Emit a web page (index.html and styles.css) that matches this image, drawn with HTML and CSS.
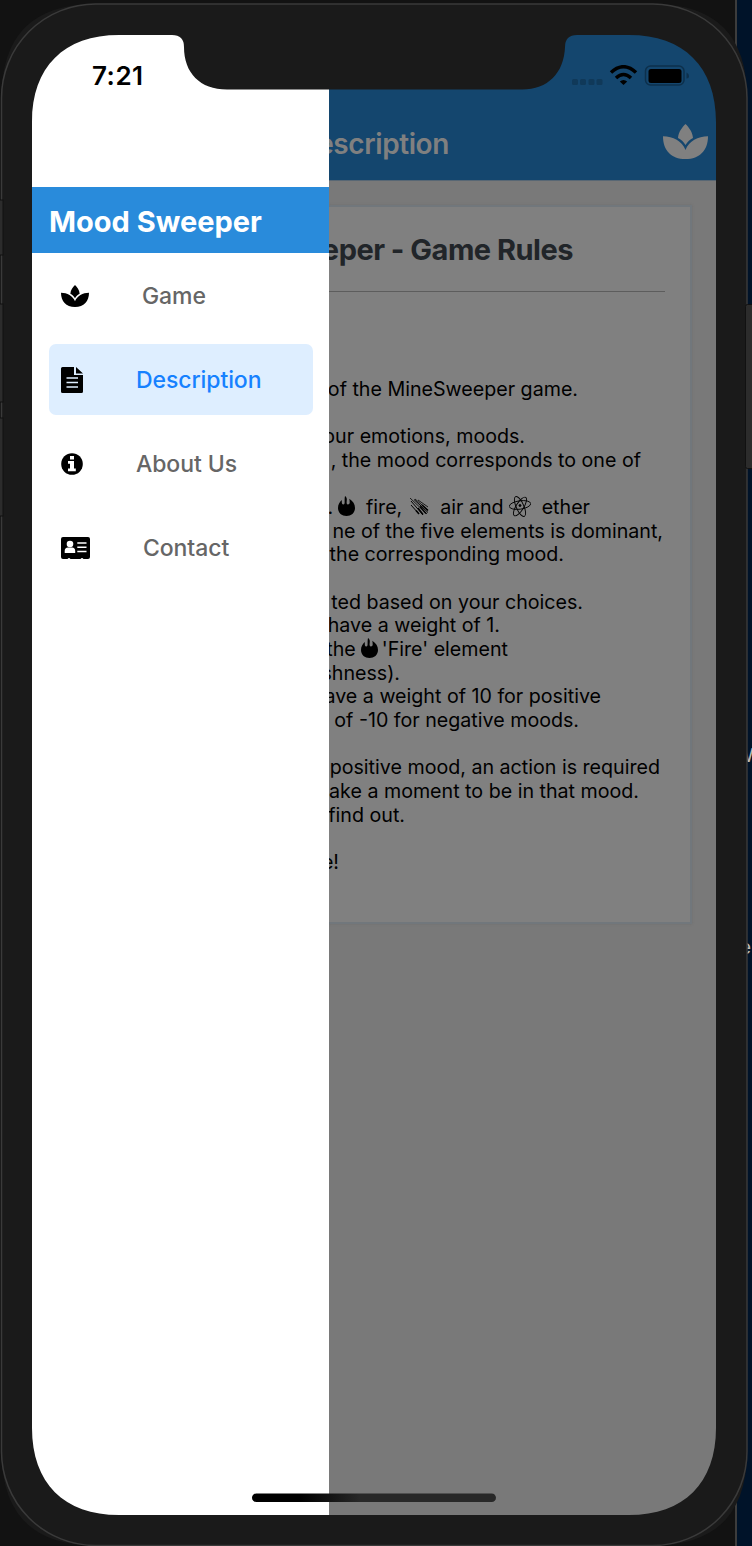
FILE: index.html
```html
<!DOCTYPE html>
<html lang="en">
<head>
<meta charset="utf-8">
<title>Mood Sweeper</title>
<link rel="stylesheet" href="styles.css">
</head>
<body>
<svg width="0" height="0" class="defs">
  <symbol id="spa" viewBox="0 0 45 35"><path d="M22.500 0C19 3.500 15.500 8 15 14C18 15.500 20.500 17.500 22.500 21C24.500 17.500 27 15.500 30 14C29.500 8 26 3.500 22.500 0ZM0 12.200C0 26 8 35 22.500 35S45 26 45 12.200C35 12.200 26 17 22.500 26C19 17 10 12.200 0 12.200Z"/></symbol>
  <symbol id="flame" viewBox="0 0 17 20"><path d="M7 0C10 2 8.300 5 8.700 7.500C9 9 11.700 8.800 11.700 6.500C11.700 5 11.500 4 11.300 2.800C15 5 17 8.500 17 12C17 17 13 20 8.500 20S0 17 0 12C0 8.500 1.500 6 4 4C3.500 6.500 3.800 8.500 5.300 8.500C7.600 8.500 6 4.500 7 0Z"/></symbol>
</svg>
<div class="desktop">
  <span class="edge-text edge-w">W</span>
  <span class="edge-text edge-e">e</span>
  <div class="screen">
    <aside class="drawer">
      <div class="clock">7:21</div>
      <h1 class="brand">Mood Sweeper</h1>
      <nav class="menu">
        <a class="item"><svg class="ico" width="28" height="22"><use href="#spa"/></svg><span class="label">Game</span></a>
        <a class="item active"><svg class="ico" width="22" height="26" viewBox="0 0 22 26"><path d="M1.500 0H13V8H22V24.500Q22 26 20.500 26H1.500Q0 26 0 24.500V1.500Q0 0 1.500 0ZM15 0L22 6.500H15Z"/><path d="M5.500 11H17M5.500 15.500H17M5.500 20H17" stroke="#deeeff" stroke-width="1.500"/></svg><span class="label">Description</span></a>
        <a class="item"><svg class="ico" width="22" height="22" viewBox="0 0 22 22"><circle cx="11" cy="11" r="10.800"/><path d="M9 3H13V6.500H9ZM7 8H13V15.500H14.800V18.300H7V15.500H9V10.800H7Z" fill="#fff"/></svg><span class="label">About Us</span></a>
        <a class="item"><svg class="ico" width="29" height="22" viewBox="0 0 29 22"><path d="M2 0H27Q29 0 29 2V20Q29 22 27 22H22.500Q21 20 19.500 22H9.500Q8 20 6.500 22H2Q0 22 0 20V2Q0 0 2 0Z"/><circle cx="9" cy="7" r="3.300" fill="#fff"/><path d="M3.700 16V14Q3.700 10.500 7 10.500H11Q14.200 10.500 14.200 14V16Z" fill="#fff"/><path d="M16.300 6H25.500M16.300 10.300H25.500M16.300 14.500H25.500" stroke="#fff" stroke-width="1.400"/></svg><span class="label">Contact</span></a>
      </nav>
    </aside>
    <main class="page">
      <header class="topbar">
        <div class="status">
          <svg width="118" height="24" viewBox="0 0 118 24"><g fill="#103959"><rect x="1" y="14" width="6" height="6" rx="1.500"/><rect x="9" y="14" width="6" height="6" rx="1.500"/><rect x="17.500" y="14" width="6" height="6" rx="1.500"/><rect x="25.500" y="14" width="6" height="6" rx="1.500"/></g><g fill="none" stroke="#000"><path d="M40 7.500Q52.500-4 65 7.500" stroke-width="3.500"/><path d="M45 13Q52.500 6 60 13" stroke-width="3.500"/></g><path d="M48.800 16.500Q52.500 13.500 56.200 16.500L52.500 20Z"/><rect x="74.500" y="1" width="38.500" height="19" rx="5" fill="none" stroke="#0d304c" stroke-width="1.500"/><rect x="77.500" y="4" width="33" height="14" rx="2.500"/><path d="M115.500 7.500Q118 8.500 118 11T115.500 13.500Z" fill="#0d304c"/></svg>
        </div>
        <div class="heading"><span>Description</span><svg width="45" height="35" fill="#808080"><use href="#spa"/></svg></div>
      </header>
      <section class="card">
        <h2 class="rules">Sweeper - Game Rules</h2>
        <div class="lines">
          <p>of the MineSweeper game.</p>
          <p></p>
          <p>your emotions, moods.</p>
          <p>, the mood corresponds to one of</p>
          <p></p>
          <p class="elements"><span>.</span><svg width="17" height="20"><use href="#flame"/></svg><span class="fire">fire,</span><svg class="air" width="19" height="18" viewBox="0 0 19 18" fill="none" stroke="#000"><path d="M0 0L17 16M5 1L18 12M8 2L18 9" stroke-width="0.800"/><path d="M1 7L9 16M1 3L13 17M4 1.500L18 14.500" stroke-width="1"/><path d="M6 12.500L9 16M8 10L13 16.500M10 8.500L16 15.500M12 7L18 12.500" stroke-width="1.500"/></svg><span class="wind">air and</span><svg class="atom" width="22" height="21" viewBox="0 0 22 21" fill="none" stroke="#000" stroke-width="0.900"><ellipse cx="11" cy="10.500" rx="3.800" ry="10.800" transform="rotate(32 11 10.500)"/><ellipse cx="11" cy="10.500" rx="3.800" ry="10.800" transform="rotate(-24 11 10.500)"/><ellipse cx="11" cy="9" rx="4.200" ry="10.800" transform="rotate(82 11 9)"/><circle cx="11" cy="9.500" r="1" fill="#000"/></svg><span>ether</span></p>
          <p>ne of the five elements is dominant,</p>
          <p>the corresponding mood.</p>
          <p></p>
          <p>ted based on your choices.</p>
          <p>have a weight of 1.</p>
          <p class="elements"><span>the</span><svg width="17" height="20"><use href="#flame"/></svg><span class="quote">'Fire' element</span></p>
          <p>shness).</p>
          <p>have a weight of 10 for positive</p>
          <p>of -10 for negative moods.</p>
          <p></p>
          <p>positive mood, an action is required</p>
          <p>take a moment to be in that mood.</p>
          <p>find out.</p>
          <p></p>
          <p>e!</p>
        </div>
      </section>
    </main>
  </div>
  <svg class="bezel" width="752" height="1546" viewBox="0 0 752 1546">
    <path fill="#1a1a1a" fill-rule="evenodd" d="M95.500 4H653Q747 4 747 98V1451Q747 1545.500 653 1545.500H95.500Q1.500 1545.500 1.500 1451V98Q1.500 4 95.500 4ZM32 122V1428C32 1483 64 1515 119 1515H629C684 1515 716 1483 716 1428V122C716 67 684 35 629 35H577Q565 35 565 47C564 73 548 89.500 522 89.500H227C200 89.500 184 73 184 47Q184 35 172 35H119C64 35 32 67 32 122Z"/>
    <rect x="1.500" y="4" width="745.500" height="1541.500" rx="94" fill="#1a1a1a" fill-opacity="0" stroke="#3a3a3a" stroke-width="1.500"/>
    <g fill="#2c2c2c" stroke="#111"><rect x="-4" y="200" width="7" height="55"/><rect x="-4" y="304" width="7" height="98"/><rect x="-4" y="418" width="7" height="98"/><rect x="745.500" y="304.500" width="12" height="164" rx="2"/></g>
    <defs><linearGradient id="home" gradientUnits="userSpaceOnUse" x1="300" y1="0" x2="360" y2="0"><stop stop-color="#000"/><stop offset="1" stop-color="#282828"/></linearGradient></defs>
    <rect x="252" y="1493.500" width="244" height="8.500" rx="4.250" fill="url(#home)"/>
  </svg>
</div>
</body>
</html>
```
FILE: styles.css
```css
* { box-sizing: border-box; }
body { margin: 0; font-family: Inter, "Liberation Sans", sans-serif; color: #000; }
.defs { position: absolute; }
.desktop {
  position: relative; width: 752px; height: 1546px; overflow: hidden; padding: 35px 36px 31px 32px;
  background: linear-gradient(90deg, #121212 735px, #3c3c3c 735px 736.500px, #001329 737px);
}
.edge-text { position: absolute; right: -10px; color: #bbb; font-size: 19px; line-height: 20px; }
.edge-w { top: 746px; }
.edge-e { top: 938px; right: 1px; }
.bezel { position: absolute; left: 0; top: 0; pointer-events: none; }
.screen { display: flex; width: 684px; height: 1480px; background: #797979; }
.drawer { flex: none; width: 297px; background: #fff; }
.clock { height: 152px; padding: 25px 0 0 60px; font-size: 26px; line-height: 32px; font-weight: 600; letter-spacing: 0.500px; }
.brand { margin: 0; height: 66px; padding-left: 17px; background: #298bdb; color: #fff; font-size: 29px; line-height: 70px; font-weight: 700; letter-spacing: 0; white-space: nowrap; }
.menu { display: grid; gap: 13.200px; padding: 7px 16px 0 16.500px; }
.item { display: flex; align-items: center; height: 71px; padding-left: 12.500px; border-radius: 7px; font-size: 23px; letter-spacing: -0.080px; font-weight: 500; color: #666; }
.active { background: #deeeff; color: #1681ff; }
.ico { flex: none; margin-right: 53px; }
.label { white-space: nowrap; }
.page { flex: 1; min-width: 0; overflow: hidden; }
.topbar { height: 146px; background: #14466e; border-bottom: 1px solid #586774; }
.status { display: flex; justify-content: flex-end; height: 84px; padding: 30px 27.500px 0 0; }
.heading { display: flex; justify-content: space-between; align-items: flex-start; height: 60px; padding: 5px 8px 0 0; color: #808080; font-size: 28px; line-height: 40px; font-weight: 600; letter-spacing: -0.400px; }
.heading span { width: 120px; display: flex; justify-content: flex-end; }
.card { width: 363px; height: 719px; margin-top: 24px; padding: 24px 0 0; background: #808080; border: 2px solid #71777c; border-left: 0; box-shadow: 0 0 2px #6c6c6c; }
.rules { display: flex; justify-content: flex-end; width: 336px; height: 61px; margin: 0; padding-right: 92px; border-bottom: 1px solid #5d5d5d; color: #212529; font-size: 29px; line-height: 38px; font-weight: 700; letter-spacing: -0.500px; white-space: nowrap; }
.lines { padding-top: 86px; font-size: 19.650px; line-height: 23.650px; }
.lines p { display: flex; justify-content: flex-end; width: 249px; height: 23.650px; margin: 0; white-space: nowrap; }
.lines p:nth-child(3) { width: 196px; }
.lines p:nth-child(4) { width: 312px; }
.lines p:nth-child(6) { width: 261px; }
.lines p:nth-child(7) { width: 334px; }
.lines p:nth-child(8) { width: 235px; }
.lines p:nth-child(10) { width: 254px; }
.lines p:nth-child(11) { width: 171px; }
.lines p:nth-child(12) { width: 179px; }
.lines p:nth-child(13) { width: 71px; }
.lines p:nth-child(14) { width: 272px; }
.lines p:nth-child(15) { width: 250px; }
.lines p:nth-child(17) { width: 331px; }
.lines p:nth-child(18) { width: 310px; }
.lines p:nth-child(19) { width: 76px; }
.lines p:nth-child(21) { width: 10px; }
.elements svg { flex: none; }
.elements span:first-child { margin-right: 5px; }
.elements .fire { margin: 0 8px 0 11px; }
.air { margin-top: 2px; }
.wind { margin: 0 5px 0 11px; }
.atom { margin-right: 11px; }
.quote { margin-left: 4px; }
```
